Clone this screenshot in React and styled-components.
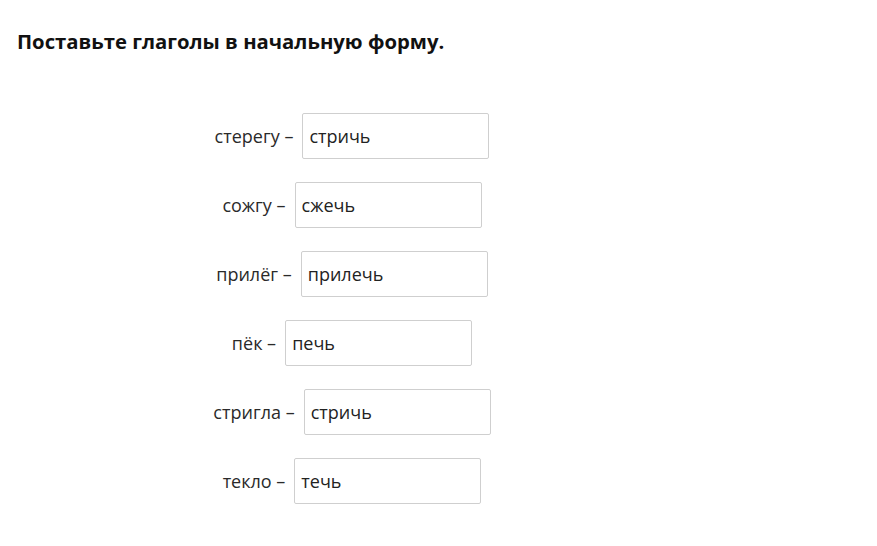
import React from 'react';
import styled, { createGlobalStyle } from 'styled-components';

const GlobalStyle = createGlobalStyle`
    body {
        margin: 0;
        background: #fff;
        font-family: "Open Sans", "Liberation Sans", sans-serif;
        color: #222;
    }
`;

const Page = styled.div`
    padding: 27px 17px 0 17px;
`;

const Title = styled.h1`
    margin: 0;
    font-size: 20.3px;
    font-weight: 700;
    line-height: 28px;
    color: #111;
`;

const Rows = styled.div`
    width: 670px;
    margin-top: 58px;
    display: flex;
    flex-direction: column;
    gap: 23px;
`;

const Row = styled.div`
    display: flex;
    justify-content: center;
    align-items: center;
    gap: 9px;
`;

const Label = styled.span`
    font-size: 18px;
    color: #2a2a2a;
    white-space: nowrap;
`;

const Answer = styled.div`
    box-sizing: border-box;
    width: 187px;
    height: 46px;
    border: 1px solid #cfcfcf;
    border-radius: 2px;
    padding: 0 6px;
    display: flex;
    align-items: center;
    font-size: 18px;
    color: #222;
`;

const items = [
    ['стерегу', 'стричь'],
    ['сожгу', 'сжечь'],
    ['прилёг', 'прилечь'],
    ['пёк', 'печь'],
    ['стригла', 'стричь'],
    ['текло', 'течь'],
];

function App() {
    return (
        <Page>
            <GlobalStyle />
            <Title>Поставьте глаголы в начальную форму.</Title>
            <Rows>
                {items.map(([word, answer]) => (
                    <Row key={word + answer}>
                        <Label>{word} –</Label>
                        <Answer>{answer}</Answer>
                    </Row>
                ))}
            </Rows>
        </Page>
    );
}

export default App;
